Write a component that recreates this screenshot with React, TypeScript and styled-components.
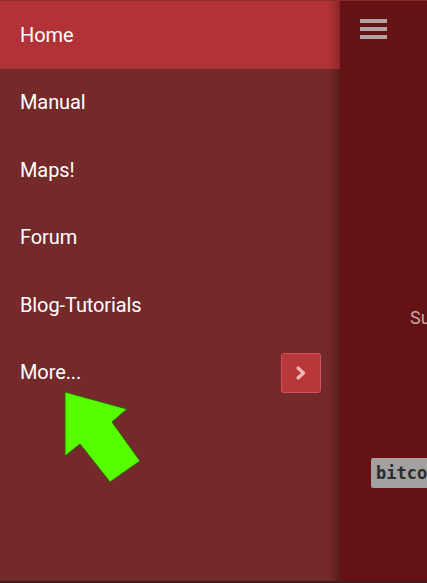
import React from "react";
import styled, { createGlobalStyle } from "styled-components";

const Global = createGlobalStyle`
  html, body { margin: 0; padding: 0; background: #651214; }
  body { font-family: Roboto, "Liberation Sans", sans-serif; }
`;

const Page = styled.div`
  position: relative;
  display: flex;
  width: 427px;
  height: 583px;
  overflow: hidden;
  box-sizing: border-box;
  border-top: 1px solid #8c2c2e;
  border-bottom: 2px solid #3e1c1d;
  background: #651214;
`;

const Drawer = styled.nav`
  width: 340px;
  flex: none;
  display: flex;
  flex-direction: column;
  background: #74292a;
  box-shadow: inset -14px 0 10px -10px rgba(40, 10, 10, 0.45);
`;

const Item = styled.div<{ $active?: boolean }>`
  height: 67.5px;
  flex: none;
  display: flex;
  align-items: center;
  justify-content: space-between;
  padding: 0 19px 0 20px;
  box-sizing: border-box;
  background: ${(p) => (p.$active ? "#b13337" : "transparent")};
  box-shadow: ${(p) => (p.$active ? "inset -14px 0 10px -10px rgba(40,10,10,0.35)" : "none")};
  color: #ffffff;
  font-size: 20px;
  letter-spacing: -0.1px;
`;

const ExpandButton = styled.button`
  width: 40px;
  height: 40px;
  margin-top: 2px;
  display: flex;
  align-items: center;
  justify-content: center;
  padding: 0;
  border: 1px solid #cf5558;
  border-radius: 3px;
  background: #b93639;
`;

const Main = styled.main`
  flex: 1;
  min-width: 0;
  display: flex;
  flex-direction: column;
  padding: 18px 0 0 20px;
  overflow: hidden;
`;

const Burger = styled.div`
  width: 27px;
  display: flex;
  flex-direction: column;
  gap: 4px;
`;

const Bar = styled.span`
  display: block;
  height: 4px;
  background: #b3a3a4;
`;

const Lead = styled.p`
  margin: 268px 0 0 50px;
  white-space: nowrap;
  color: #c9a9aa;
  font-size: 18px;
`;

const Code = styled.code`
  align-self: flex-start;
  margin: 130px 0 0 11px;
  padding: 5px 5px;
  white-space: nowrap;
  background: #a3a0a0;
  border-radius: 2px;
  color: #2c2c2c;
  font-family: "DejaVu Sans Mono", "Liberation Mono", monospace;
  font-weight: bold;
  font-size: 17px;
`;

const Arrow = styled.svg`
  position: absolute;
  left: 0;
  top: 0;
  pointer-events: none;
`;

const items = ["Home", "Manual", "Maps!", "Forum", "Blog-Tutorials"];

export default function App() {
  return (
    <>
      <Global />
      <Page>
        <Drawer>
          {items.map((t, i) => (
            <Item key={t} $active={i === 0}>
              {t}
            </Item>
          ))}
          <Item>
            More...
            <ExpandButton aria-label="expand">
              <svg width="14" height="16" viewBox="0 0 14 16">
                <path
                  d="M4 3 L9.5 8 L4 13"
                  fill="none"
                  stroke="#f4b8ba"
                  strokeWidth="3.2"
                  strokeLinecap="round"
                  strokeLinejoin="round"
                />
              </svg>
            </ExpandButton>
          </Item>
        </Drawer>
        <Main>
          <Burger>
            <Bar />
            <Bar />
            <Bar />
          </Burger>
          <Lead>Support</Lead>
          <Code>bitcoin</Code>
        </Main>
        <Arrow width="427" height="583" viewBox="0 0 427 583">
          <polygon
            points="65,391 127,408 112,421 140,460 110,481 80,443 65,455"
            fill="#55ff00"
            stroke="#3a5a10"
            strokeWidth="1"
            strokeLinejoin="miter"
          />
        </Arrow>
      </Page>
    </>
  );
}
